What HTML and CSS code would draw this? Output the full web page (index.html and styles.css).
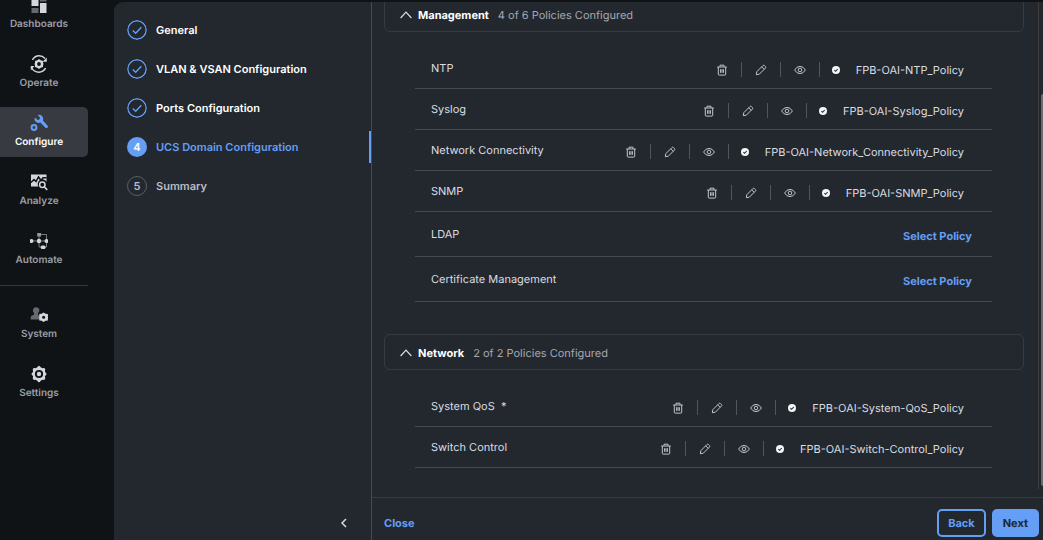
FILE: index.html
```html
<!DOCTYPE html>
<html lang="en">
<head>
<meta charset="utf-8">
<title>UCS Domain Configuration</title>
<link rel="stylesheet" href="styles.css">
</head>
<body>
<svg class="defs" aria-hidden="true">
  <symbol id="trash" viewBox="0 0 12 12"><path d="M1.2 3h9.6M4 2.8V1.2h4v1.6M2.3 3v7.2q0 .9.9.9h5.6q.9 0 .9-.9V3M4.6 5.2v3.6M6 5.2v3.6M7.4 5.2v3.6"/></symbol>
  <symbol id="pencil" viewBox="0 0 12 12"><path d="M1.3 10.7l.5-3L7.9 1.6q.8-.8 1.6 0l.9.9q.8.8 0 1.6L4.3 10.2zM6.7 2.8l2.5 2.5"/></symbol>
  <symbol id="eye" viewBox="0 0 12 12"><path d="M.6 6Q2.6 2.400 6 2.400T11.400 6Q9.400 9.600 6 9.600T.6 6z"/><circle cx="6" cy="6" r="1.800"/></symbol>
  <symbol id="done" viewBox="0 0 8 8"><circle cx="4" cy="4" r="4" fill="#f4f5f7"/><path d="M2.4 4.2l1.2 1.1 2.1-2.3" fill="none" stroke="#23282e" stroke-width="1.1"/></symbol>
  <symbol id="tick" viewBox="0 0 20 20"><circle cx="10" cy="10" r="9.2"/><path d="M5.8 10.4l2.9 2.8 5.6-6"/></symbol>
  <symbol id="up" viewBox="0 0 12 8"><path d="M.6 7L6 1.2 11.4 7"/></symbol>
  <symbol id="gear" viewBox="0 0 18 18"><path fill-rule="evenodd" d="M7.3 2.3Q9-.9 10.7 2.3L12.4 3.2Q16.1 2.6 15 5.9V7Q18 9 15 11v1.1q1.100 3.300-2.600 2.700l-1.700.9Q9 18.900 7.300 15.700l-1.700-.9Q1.900 15.400 3 12.100V11Q0 9 3 7V5.900Q1.900 2.600 5.600 3.200zM9 4.900a4.100 4.100 0 1 0 0 8.200 4.100 4.100 0 0 0 0-8.200z"/><circle cx="9" cy="9" r="2.200"/></symbol>
</svg>
<div class="app">
  <nav class="rail" aria-label="Main">
    <a class="rail-item" href="#"><svg class="rail-icon" viewBox="0 0 18 18"><path d="M1.500 1h7v9h-7zM10 7h6.500v10H10z"/><path class="dim" d="M10 1h6.500v4.500H10zM1.500 12h7v5h-7z"/></svg>Dashboards</a>
    <a class="rail-item" href="#"><svg class="rail-icon" viewBox="0 0 18 18"><path class="line" d="M2.400 4.800Q5 .8 9 .8q3.600 0 6 2.600M1.300 12.500Q4 17.200 9 17.200q4 0 6.600-4"/><path d="M16.800 2.500v4.200h-4.200zM.8 15.500v-4.400h3.600zM9 4l1.700 1.200 2.300.8v2l.6 1-.6 1v2l-2.300.8L9 14l-1.700-1.200L5 12v-2l-.6-1L5 8V6l2.300-.8z"/><circle class="hole" cx="9" cy="9" r="1.900"/></svg>Operate</a>
    <a class="rail-item active" href="#" aria-current="page"><svg class="rail-icon" viewBox="0 0 18 18"><path d="M5 3.500L7.500 6l2-.5.5-2L7.600 1Q11 0 12.600 2.700 13.700 4.700 12.900 6.500l5 5.500q.3 1.400-1 2-.8.300-1.500-.2l-5-5.200Q7.700 9.600 5.700 7.800 3.900 5.900 5 3.500z"/><circle class="line thick" cx="4" cy="13.500" r="2.400"/></svg>Configure</a>
    <a class="rail-item" href="#"><svg class="rail-icon" viewBox="0 0 18 18"><path d="M1 1.500h15.500v7.200A4.600 4.600 0 0 0 8.300 13.500H1z"/><path class="cut" d="M1 9.500l3-3 2 2L8.500 4l2.500 3.500 2-2.700h3.500"/><circle class="line" cx="12.300" cy="11.800" r="2.700"/><path class="line" d="M14.300 13.900l3 3"/></svg>Analyze</a>
    <a class="rail-item" href="#"><svg class="rail-icon" viewBox="0 0 18 18"><path class="wire" d="M0 9h16.500M9 15V2.500h7.500V15H9"/><path class="mid" d="M7.200 1h3.800v3.500H7.200z"/><circle cx="1.500" cy="9" r="2"/><circle cx="9" cy="9" r="2.200"/><circle cx="16.500" cy="9" r="2"/><rect x="10.700" y="13.400" width="4.800" height="3.600" rx="1.500"/></svg>Automate</a>
    <hr class="rail-rule">
    <a class="rail-item" href="#"><svg class="rail-icon" viewBox="0 0 18 18"><path class="dim" d="M6 1.200a3.300 3.300 0 0 1 2.200 5.900L8 9q2 .6 2 2.300V13.500H.7V11Q1 9 4 8.800V7A3.300 3.300 0 0 1 6 1.200z"/><path d="M13.600 6.500l2 1.200 2.300.4v2.300l.3.900-.3.900v2.200l-2.300.4-2 1.200-2-1.200-2.300-.4v-2.200L9 11.300l.3-.9V8.100l2.300-.4z"/><circle class="hole" cx="13.600" cy="11.300" r="1.500"/></svg>System</a>
    <a class="rail-item" href="#"><svg class="rail-icon"><use href="#gear"/></svg>Settings</a>
  </nav>
  <div class="wizard">
    <aside class="steps">
      <ol class="step-list">
        <li class="step"><svg class="step-mark"><use href="#tick"/></svg>General</li>
        <li class="step"><svg class="step-mark"><use href="#tick"/></svg>VLAN &amp; VSAN Configuration</li>
        <li class="step"><svg class="step-mark"><use href="#tick"/></svg>Ports Configuration</li>
        <li class="step current" aria-current="step"><span class="step-mark">4</span>UCS Domain Configuration</li>
        <li class="step todo"><span class="step-mark">5</span>Summary</li>
      </ol>
      <button class="collapse" aria-label="Collapse steps"><svg viewBox="0 0 6 10"><path d="M5 1L1 5l4 4"/></svg></button>
    </aside>
    <main class="content">
      <div class="scroll">
        <div class="sections">
          <section class="section">
            <button class="section-head" aria-expanded="true"><svg class="chevron"><use href="#up"/></svg><b>Management</b><span>4 of 6 Policies Configured</span></button>
            <ul class="rows">
              <li class="row"><span>NTP</span><div class="policy"><button aria-label="Delete"><svg><use href="#trash"/></svg></button><button aria-label="Edit"><svg><use href="#pencil"/></svg></button><button aria-label="View"><svg><use href="#eye"/></svg></button><svg class="done"><use href="#done"/></svg><span>FPB-OAI-NTP_Policy</span></div></li>
              <li class="row"><span>Syslog</span><div class="policy"><button aria-label="Delete"><svg><use href="#trash"/></svg></button><button aria-label="Edit"><svg><use href="#pencil"/></svg></button><button aria-label="View"><svg><use href="#eye"/></svg></button><svg class="done"><use href="#done"/></svg><span>FPB-OAI-Syslog_Policy</span></div></li>
              <li class="row"><span>Network Connectivity</span><div class="policy"><button aria-label="Delete"><svg><use href="#trash"/></svg></button><button aria-label="Edit"><svg><use href="#pencil"/></svg></button><button aria-label="View"><svg><use href="#eye"/></svg></button><svg class="done"><use href="#done"/></svg><span>FPB-OAI-Network_Connectivity_Policy</span></div></li>
              <li class="row"><span>SNMP</span><div class="policy"><button aria-label="Delete"><svg><use href="#trash"/></svg></button><button aria-label="Edit"><svg><use href="#pencil"/></svg></button><button aria-label="View"><svg><use href="#eye"/></svg></button><svg class="done"><use href="#done"/></svg><span>FPB-OAI-SNMP_Policy</span></div></li>
              <li class="row empty"><span>LDAP</span><button class="select">Select Policy</button></li>
              <li class="row empty"><span>Certificate Management</span><button class="select">Select Policy</button></li>
            </ul>
          </section>
          <section class="section">
            <button class="section-head" aria-expanded="true"><svg class="chevron"><use href="#up"/></svg><b>Network</b><span>2 of 2 Policies Configured</span></button>
            <ul class="rows">
              <li class="row"><span>System QoS &nbsp;*</span><div class="policy"><button aria-label="Delete"><svg><use href="#trash"/></svg></button><button aria-label="Edit"><svg><use href="#pencil"/></svg></button><button aria-label="View"><svg><use href="#eye"/></svg></button><svg class="done"><use href="#done"/></svg><span>FPB-OAI-System-QoS_Policy</span></div></li>
              <li class="row"><span>Switch Control</span><div class="policy"><button aria-label="Delete"><svg><use href="#trash"/></svg></button><button aria-label="Edit"><svg><use href="#pencil"/></svg></button><button aria-label="View"><svg><use href="#eye"/></svg></button><svg class="done"><use href="#done"/></svg><span>FPB-OAI-Switch-Control_Policy</span></div></li>
            </ul>
          </section>
        </div>
        <div class="track"><div class="thumb"></div></div>
      </div>
      <footer class="actions">
        <button class="close">Close</button>
        <button class="btn outline">Back</button>
        <button class="btn primary">Next</button>
      </footer>
    </main>
  </div>
</div>
</body>
</html>
```
FILE: styles.css
```css
* { box-sizing: border-box; }
body {
  margin: 0;
  background: #0f1316;
  color: #d9dce1;
  font: 11px/16px Inter, "Liberation Sans", sans-serif;
  text-rendering: geometricPrecision;
}
button { padding: 0; border: 0; background: none; color: inherit; font: inherit; text-rendering: inherit; cursor: pointer; }
ul, ol { margin: 0; padding: 0; list-style: none; }
svg { flex: none; }
.defs { display: none; }
.app { display: flex; height: 100vh; overflow: hidden; }

/* Navigation rail, scrolled slightly past its first item */
.rail { flex: none; width: 114px; display: flex; flex-direction: column; gap: 9px; margin-top: -11px; }
.rail-item {
  flex: none;
  width: 88px;
  height: 50px;
  padding: 7px 10px 0 0;
  display: flex;
  flex-direction: column;
  align-items: center;
  gap: 2px;
  border-radius: 0 5px 5px 0;
  color: #9b9fa7;
  font-size: 10px;
  font-weight: 600;
  text-decoration: none;
}
.rail-item.active { background: #373b41; color: #fff; }
.rail-icon { width: 18px; height: 18px; fill: #d4d7dc; }
.active .rail-icon { fill: #649ef5; }
.rail-icon .dim { fill: #66696e; }
.rail-icon .mid { fill: #96999e; }
.rail-icon .hole { fill: #0f1316; }
.rail-icon .line { fill: none; stroke: #d4d7dc; stroke-width: 1.5; }
.rail-icon .thick { stroke: #649ef5; stroke-width: 2; }
.rail-icon .cut { fill: none; stroke: #0f1316; stroke-width: 1.5; }
.rail-icon .wire { fill: none; stroke: #777a7f; stroke-width: 1; }
.rail-rule { width: 88px; height: 1px; margin: 1px 0 4px; border: 0; background: #34383d; }

.wizard { flex: 1; min-width: 0; display: flex; margin-top: 2px; border-radius: 9px 0 0 0; background: #23282e; overflow: hidden; }

.steps { flex: none; width: 258px; display: flex; flex-direction: column; justify-content: space-between; border-right: 1px solid #474b51; }
.step-list { padding-top: 12px; }
.step { display: flex; align-items: center; gap: 9px; height: 32px; margin-bottom: 7px; padding-left: 13px; color: #fff; font-weight: 600; }
.step-mark {
  display: flex;
  align-items: center;
  justify-content: center;
  width: 20px;
  height: 20px;
  border-radius: 50%;
  fill: none;
  stroke: #649ef5;
  stroke-width: 1.4;
}
.current { border-right: 2px solid #649ef5; color: #649ef5; }
.current .step-mark { background: #649ef5; color: #fff; }
.todo { color: #b9bcc4; }
.todo .step-mark { border: 1px solid #5a5e65; }
.collapse { align-self: flex-end; width: 16px; height: 16px; margin: 0 19px 9px 0; display: flex; align-items: center; justify-content: center; }
.collapse svg { width: 6px; height: 10px; fill: none; stroke: #d9dce1; stroke-width: 1.5; }

.content { flex: 1; min-width: 0; display: flex; flex-direction: column; }
.scroll { flex: 1; min-height: 0; display: flex; overflow: hidden; }
.sections { flex: 1; min-width: 0; padding: 0 14px 0 12px; margin-top: -6px; }
.section { margin-bottom: 32px; }
.section-head {
  display: flex;
  align-items: center;
  width: 100%;
  height: 36px;
  padding: 1px 0 0 15px;
  border: 1px solid #383c42;
  border-radius: 6px;
  color: #a6a9b1;
}
.section-head b { margin: 0 9px 0 6px; color: #fff; font-weight: 700; }
.chevron { width: 12px; height: 8px; fill: none; stroke: #d9dce1; stroke-width: 1.2; }
.rows { padding: 16px 32px 0 31px; }
.row { display: flex; align-items: center; justify-content: space-between; height: 41px; padding: 0 28px 0 16px; border-bottom: 1px solid #464a50; }
.row.empty { height: 45px; padding-right: 20px; }
.policy { display: flex; align-items: center; padding-top: 3px; }
.policy button { display: flex; align-items: center; justify-content: center; width: 39px; height: 15px; border-right: 1px solid #50545b; }
.policy button svg { width: 12px; height: 12px; fill: none; stroke: #c0c4cc; stroke-width: 1; }
.done { width: 8px; height: 8px; margin: 0 16px 0 12px; }
.select { padding-top: 3px; color: #649ef5; font-weight: 700; }

.track { flex: none; width: 5px; height: 487px; padding: 92px 0 3px 2px; border-left: 1px solid #3f3d3d; }
.thumb { height: 100%; border-radius: 2px 0 0 2px; background: #6b6b6b; }

.actions { flex: none; display: flex; align-items: center; gap: 6px; height: 43px; padding: 8px 4px 0 12px; border-top: 1px solid #373b41; }
.close { margin-right: auto; color: #649ef5; font-weight: 700; }
.btn { height: 28px; padding: 0 9px; border: 2px solid #649ef5; border-radius: 5px; font-weight: 700; }
.outline { color: #649ef5; }
.primary { background: #649ef5; color: #1b2733; }
```
